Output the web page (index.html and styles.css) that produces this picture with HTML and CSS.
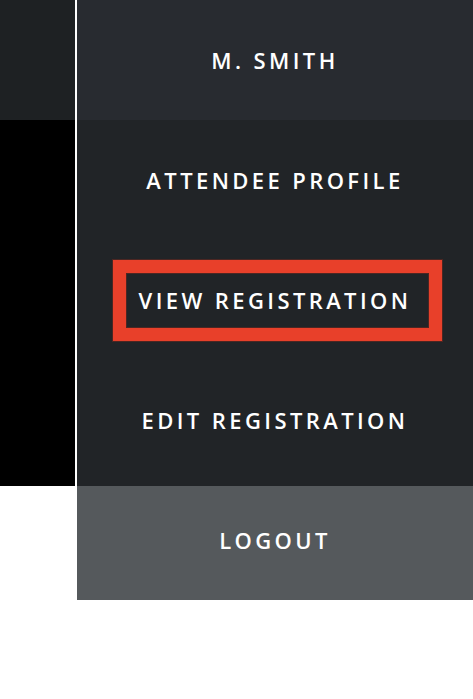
FILE: index.html
```html
<!DOCTYPE html>
<html lang="en">
<head>
<meta charset="utf-8">
<title>Menu</title>
<link rel="stylesheet" href="styles.css">
</head>
<body>
<div class="page">
  <aside class="side">
    <div class="side-top"></div>
    <div class="side-body"></div>
  </aside>
  <div class="divider"></div>
  <nav class="menu">
    <div class="menu-head"><span class="label">M. SMITH</span></div>
    <div class="menu-items">
      <a class="item"><span class="label">ATTENDEE PROFILE</span></a>
      <a class="item"><span class="label">VIEW REGISTRATION</span></a>
      <a class="item"><span class="label">EDIT REGISTRATION</span></a>
    </div>
    <a class="logout"><span class="label">LOGOUT</span></a>
  </nav>
  <div class="highlight"></div>
</div>
</body>
</html>
```
FILE: styles.css
```css
html, body {
  margin: 0;
  padding: 0;
  background: #ffffff;
}
.page {
  position: relative;
  display: flex;
  align-items: flex-start;
  width: 473px;
}
.side {
  width: 75px;
  display: flex;
  flex-direction: column;
}
.side-top {
  height: 120px;
  background: #1e2123;
}
.side-body {
  height: 366px;
  background: #000000;
}
.divider {
  width: 2px;
  height: 486px;
  background: #ffffff;
}
.menu {
  width: 396px;
  display: flex;
  flex-direction: column;
  font-family: "Open Sans", "Liberation Sans", sans-serif;
  font-weight: 560;
  font-size: 22px;
  letter-spacing: 3.4px;
  color: #ffffff;
}
.label {
  display: block;
  text-align: center;
  white-space: nowrap;
}
.menu-head {
  height: 120px;
  background: #282b30;
  display: flex;
  align-items: center;
  justify-content: center;
}
.menu-items {
  background: #212427;
  display: flex;
  flex-direction: column;
  height: 366px;
}
.item {
  height: 120px;
  display: flex;
  align-items: center;
  justify-content: center;
}
.logout {
  height: 114px;
  background: #55595c;
  display: flex;
  align-items: center;
  justify-content: center;
  padding-bottom: 6px;
  box-sizing: border-box;
}
.highlight {
  position: absolute;
  left: 113px;
  top: 260px;
  width: 329px;
  height: 81px;
  box-sizing: border-box;
  border: 13px solid #e8402a;
  box-shadow: 0 0 0 1px rgba(120, 40, 30, 0.5), inset 0 0 0 1px rgba(120, 40, 30, 0.5);
}
```
